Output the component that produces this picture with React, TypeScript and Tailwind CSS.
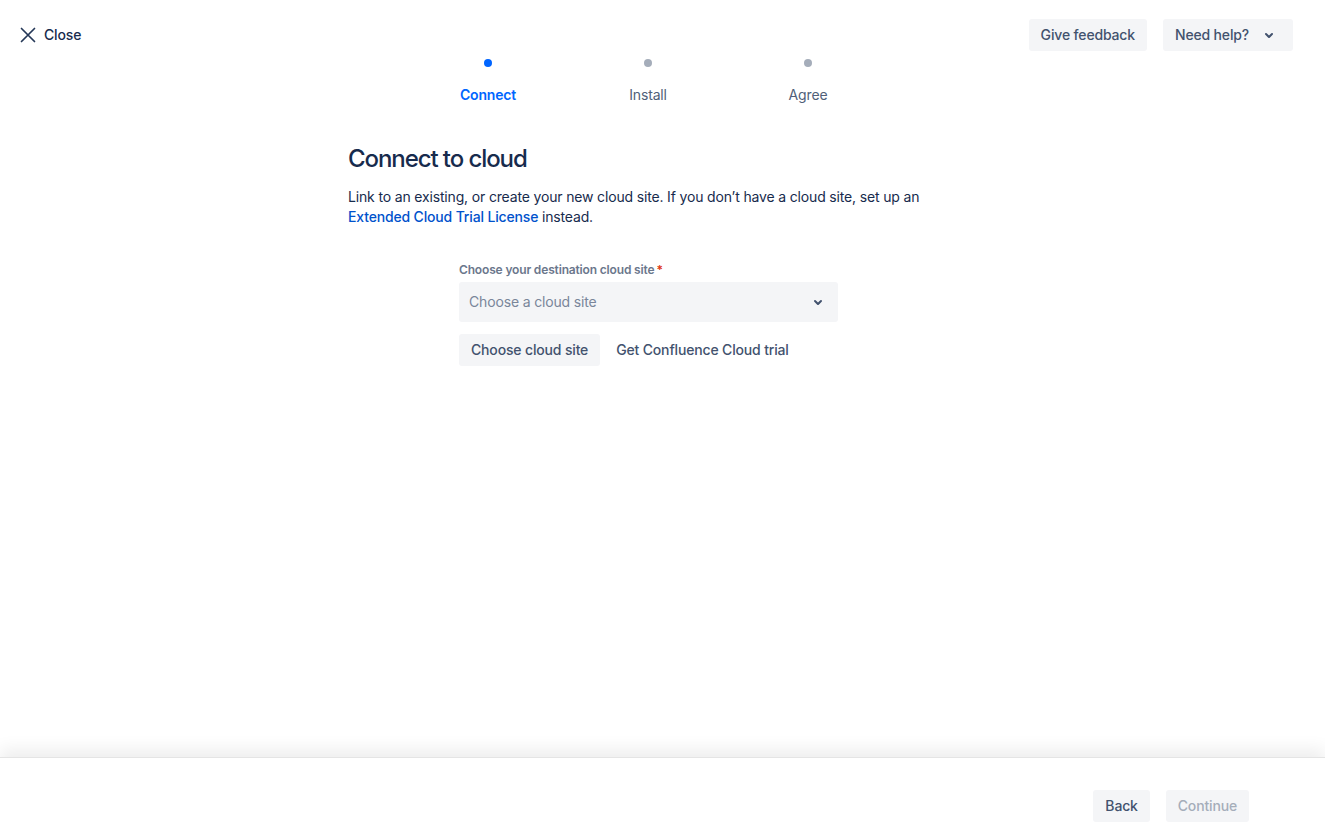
const STEPS = ['Connect', 'Install', 'Agree']

function Chevron() {
  return (
    <svg width="24" height="24" viewBox="0 0 24 24" className="shrink-0">
      <path
        fill="currentColor"
        d="M8.292 10.293a1.009 1.009 0 0 0 0 1.419l2.939 2.965c.218.215.5.322.779.322s.556-.107.769-.322l2.93-2.955a1.01 1.01 0 0 0 0-1.419.987.987 0 0 0-1.406 0l-2.298 2.317-2.307-2.327a.99.99 0 0 0-1.406 0z"
      />
    </svg>
  )
}

export default function App() {
  const btn = 'h-8 rounded-[3px] bg-[#f4f5f7] px-3 text-sm font-medium text-[#42526e]'

  return (
    <div
      className="flex h-screen flex-col overflow-hidden bg-white tracking-[-0.01em] text-[#172b4d]"
      style={{ fontFamily: 'Inter, "Noto Sans", sans-serif' }}
    >
      <header className="flex items-center justify-between pl-5 pr-8 pt-[19px]">
        <button className="flex h-8 items-center gap-2 text-sm font-medium text-[#172b4d]">
          <svg width="16" height="16" viewBox="0 0 16 16">
            <path d="M1.5 1.5 L14.5 14.5 M14.5 1.5 L1.5 14.5" stroke="#253858" strokeWidth="1.7" strokeLinecap="round" />
          </svg>
          Close
        </button>
        <div className="flex gap-4">
          <button className={btn}>Give feedback</button>
          <button className={btn + ' flex items-center'}>
            Need help?
            <span className="ml-2 flex w-6 justify-center">
              <Chevron />
            </span>
          </button>
        </div>
      </header>

      <main className="w-[1296px] flex-1">
        <div className="mx-auto w-[600px]">
          <div className="mt-2 flex justify-center">
            {STEPS.map((s, i) => (
              <div key={s} className="flex w-40 flex-col items-center">
                <span className={`h-2 w-2 rounded-full ${i === 0 ? 'bg-[#0065ff]' : 'bg-[#a5adba]'}`} />
                <span
                  className={`mt-[18px] text-sm leading-5 ${
                    i === 0 ? 'font-semibold text-[#0065ff]' : 'text-[#505f79]'
                  }`}
                >
                  {s}
                </span>
              </div>
            ))}
          </div>

          <h1 className="mt-[40px] text-2xl leading-7 font-medium tracking-[-0.045em] text-[#172b4d]">
            Connect to cloud
          </h1>
          <p className="mt-[14px] text-sm leading-5">
            Link to an existing, or create your new cloud site. If you don’t have a cloud site, set up an{' '}
            <a className="font-medium text-[#0052cc]">Extended Cloud Trial License</a> instead.
          </p>

          <div className="mx-auto mt-[35px] w-[380px] pl-px">
            <label className="block text-xs leading-4 font-semibold text-[#6b778c]">
              Choose your destination cloud site<span className="ml-0.5 text-[#de350b]">*</span>
            </label>
            <div className="mt-1 flex h-10 items-center justify-between rounded-[3px] bg-[#f4f5f7] pl-2.5 pr-2 text-sm text-[#7a869a]">
              <span>Choose a cloud site</span>
              <span className="text-[#42526e]">
                <Chevron />
              </span>
            </div>
            <div className="mt-3 flex gap-1">
              <button className={btn}>Choose cloud site</button>
              <button className="h-8 rounded-[3px] px-3 text-sm font-medium text-[#42526e]">
                Get Confluence Cloud trial
              </button>
            </div>
          </div>
        </div>
      </main>

      <footer className="flex h-[78px] items-start justify-end gap-4 border-t border-[#e4e4e4] pr-[76px] pt-[32px] shadow-[0_-8px_16px_rgba(0,0,0,0.07)]">
        <button className={btn}>Back</button>
        <button className="h-8 rounded-[3px] bg-[#f4f5f7] px-3 text-sm font-medium text-[#a5adba]">Continue</button>
      </footer>
    </div>
  )
}
